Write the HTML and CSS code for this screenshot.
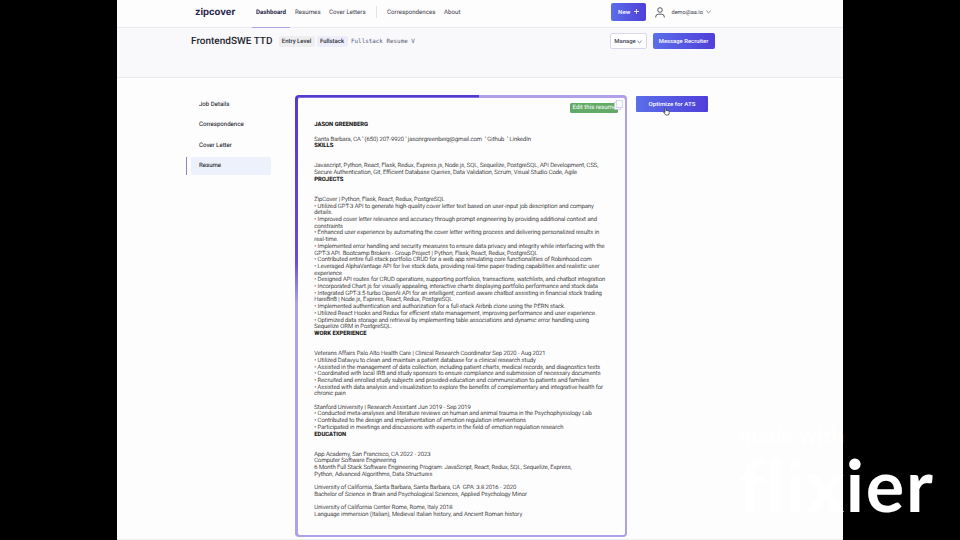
FILE: index.html
```html
<!DOCTYPE html>
<html lang="en">
<head>
<meta charset="utf-8">
<title>zipcover</title>
<link rel="stylesheet" href="styles.css">
</head>
<body>
<div class="app">
  <header class="topbar">
    <div class="logo">zipcover</div>
    <nav class="nav">
      <a class="nav-item active w-dash">Dashboard</a>
      <a class="nav-item w-res">Resumes</a>
      <a class="nav-item w-cov">Cover Letters</a>
      <span class="divider"></span>
      <a class="nav-item w-cor">Correspondences</a>
      <a class="nav-item w-abt">About</a>
    </nav>
    <div class="account">
      <button class="btn new">New <svg width="5" height="5" viewBox="0 0 5 5"><path d="M2.5 0v5M0 2.5h5" stroke="#fff" stroke-width=".8"/></svg></button>
      <svg class="user" width="10" height="11" viewBox="0 0 10 11" fill="none" stroke="#45455c" stroke-width=".9"><circle cx="5" cy="3" r="2.3"/><path d="M.7 10.5V9.8Q.9 7.2 3.3 7.2H6.7Q9.1 7.2 9.3 9.8v.7"/></svg>
      <span class="email">demo@aa.io</span>
      <svg width="5" height="4" viewBox="0 0 5 4" fill="none" stroke="#55556b" stroke-width=".7"><path d="M.4 .8l2.1 2 2.1-2"/></svg>
    </div>
  </header>
  <section class="subhead">
    <h1>FrontendSWE TTD</h1>
    <span class="tag grey">Entry Level</span>
    <span class="tag lilac">Fullstack</span>
    <span class="mono">Fullstack Resume V</span>
    <div class="actions">
      <button class="btn manage">Manage <svg width="5" height="4" viewBox="0 0 5 4" fill="none" stroke="#45455c" stroke-width=".7"><path d="M.4 .8l2.1 2 2.1-2"/></svg></button>
      <button class="btn recruiter">Message Recruiter</button>
    </div>
  </section>
  <main class="content">
    <aside class="side">
      <a>Job Details</a>
      <a>Correspondence</a>
      <a>Cover Letter</a>
      <a class="selected">Resume</a>
    </aside>
    <article class="resume">
      <div class="paper">
        <span class="edit">Edit this resume</span>
        <svg class="copy" width="9" height="10" viewBox="0 0 9 10" fill="#fcfcff" stroke="#c9c9ec" stroke-width=".8"><rect x=".5" y="2.3" width="6" height="7"/><rect x="2.3" y=".5" width="6" height="7"/></svg>
        <div class="text"><b class="name">JASON GREENBERG</b>
Santa Barbara, CA ' (650) 207-9920 ' jasonrgreenberg@gmail.com &nbsp;' Github &nbsp;' LinkedIn
<b>SKILLS</b>


Javascript, Python, React, Flask, Redux, Express.js, Node.js, SQL, Sequelize, PostgreSQL, API Development, CSS,
Secure Authentication, Git, Efficient Database Queries, Data Validation, Scrum, Visual Studio Code, Agile
<b>PROJECTS</b>


ZipCover | Python, Flask, React, Redux, PostgreSQL
• Utilized GPT-3 API to generate high-quality cover letter text based on user-input job description and company
details.
• Improved cover letter relevance and accuracy through prompt engineering by providing additional context and
constraints
• Enhanced user experience by automating the cover letter writing process and delivering personalized results in
real-time.
• Implemented error handling and security measures to ensure data privacy and integrity while interfacing with the
GPT-3 API. Bootcamp Brokers - Group Project | Python, Flask, React, Redux, PostgreSQL
• Contributed entire full-stack portfolio CRUD for a web app simulating core functionalities of Robinhood.com
• Leveraged AlphaVantage API for live stock data, providing real-time paper-trading capabilities and realistic user
experience
• Designed API routes for CRUD operations, supporting portfolios, transactions, watchlists, and chatbot integration
• Incorporated Chart.js for visually appealing, interactive charts displaying portfolio performance and stock data
• Integrated GPT-3.5-turbo OpenAI API for an intelligent, context-aware chatbot assisting in financial stock trading
HareBnB | Node.js, Express, React, Redux, PostgreSQL
• Implemented authentication and authorization for a full-stack Airbnb clone using the PERN stack.
• Utilized React Hooks and Redux for efficient state management, improving performance and user experience.
• Optimized data storage and retrieval by implementing table associations and dynamic error handling using
Sequelize ORM in PostgreSQL.
<b>WORK EXPERIENCE</b>


Veterans Affairs Palo Alto Health Care | Clinical Research Coordinator Sep 2020 - Aug 2021
• Utilized Datavyu to clean and maintain a patient database for a clinical research study
• Assisted in the management of data collection, including patient charts, medical records, and diagnostics tests
• Coordinated with local IRB and study sponsors to ensure compliance and submission of necessary documents
• Recruited and enrolled study subjects and provided education and communication to patients and families
• Assisted with data analysis and visualization to explore the benefits of complementary and integrative health for
chronic pain

Stanford University | Research Assistant Jun 2019 - Sep 2019
• Conducted meta-analyses and literature reviews on human and animal trauma in the Psychophysiology Lab
• Contributed to the design and implementation of emotion regulation interventions
• Participated in meetings and discussions with experts in the field of emotion regulation research
<b>EDUCATION</b>


App Academy, San Francisco, CA 2022 - 2023
Computer Software Engineering
6 Month Full Stack Software Engineering Program: JavaScript, React, Redux, SQL, Sequelize, Express,
Python, Advanced Algorithms, Data Structures

University of California, Santa Barbara, Santa Barbara, CA &nbsp;GPA: 3.8 2016 - 2020
Bachelor of Science in Brain and Psychological Sciences, Applied Psychology Minor

University of California Center Rome, Rome, Italy 2018
Language immersion (Italian), Medieval Italian history, and Ancient Roman history</div>
      </div>
    </article>
    <div class="tools">
      <button class="btn optimize">Optimize for ATS</button>
      <svg class="cursor" width="7" height="9" viewBox="0 0 7 9" fill="#fff" stroke="#333" stroke-width=".7"><path d="M2 5V1.1q.5-.8 1 0V3.4l2.7.6q.8.3.6 1.2L5.6 8H2.7L.6 5.2q.4-.8 1.4.4z"/></svg>
    </div>
  </main>
</div>
<div class="watermark"><span class="made">made with</span><span class="brand">flixier</span></div>
</body>
</html>
```
FILE: styles.css
```css
* { box-sizing: border-box; }
body {
  margin: 0;
  width: 960px;
  height: 540px;
  overflow: hidden;
  position: relative;
  background: #000;
  font-family: Roboto, "Liberation Sans", sans-serif;
  font-size: 6.2px;
  color: #3a3a4c;
  text-rendering: geometricPrecision;
}
.app { width: 726px; height: 540px; margin-left: 117px; background: #fdfdfd; border-bottom: 1px solid #eee; }
.topbar { height: 28px; display: flex; padding-left: 78px; border-bottom: 1px solid #ebebef; }
.logo { width: 50px; flex: none; font: 700 9.5px/25px Inter, sans-serif; color: #25224b; }
.nav { display: flex; flex: none; width: 366px; padding-left: 7px; }
.nav-item { line-height: 25px; height: 28px; white-space: nowrap; }
.nav-item.active { font-weight: 700; color: #29264a; border-bottom: 1px solid #a9a4df; }
.w-dash { width: 38px; padding-left: 4px; }
.w-res { width: 39px; padding-left: 5px; }
.w-cov { width: 47px; }
.divider { width: 1px; height: 12px; margin-top: 6px; background: #e3e3e9; }
.w-cor { margin-left: 10px; width: 57px; }
.account { display: flex; flex: none; align-items: center; height: 24px; }
.account svg { flex: none; }
.btn { font: 500 6.2px/1 Roboto, sans-serif; border: 0; border-radius: 2px; padding: 0; color: #fff; background: linear-gradient(90deg, #5b6ee9, #4f3fd9); white-space: nowrap; }
.new { flex: none; width: 35px; height: 18px; margin-right: 9px; }
.new svg { margin-left: 2px; vertical-align: -0.5px; }
.email { flex: none; width: 31px; margin: 0 3px 0 6.5px; font-size: 5.6px; line-height: 8px; padding-top: 1px; }
.subhead { height: 50px; display: flex; align-items: flex-start; padding-left: 74px; background: #f9f9fc; border-bottom: 1px solid #e8e8ed; }
.subhead > * { flex: none; }
h1 { margin: 7px 0 0; width: 87px; font-size: 10px; line-height: 14px; font-weight: 500; color: #24242d; white-space: nowrap; }
.tag { margin-top: 8px; height: 11px; font-size: 6px; line-height: 11px; font-weight: 500; text-align: center; border-radius: 2px; color: #2e2e3c; }
.grey { width: 36px; margin-left: 0.5px; background: #eeeeef; }
.lilac { width: 31px; margin-left: 2px; background: #eeeefa; }
.mono { margin: 8px 0 0 3.5px; width: 66px; font: 5.9px/12px "DejaVu Sans Mono", monospace; color: #565b78; white-space: nowrap; }
.actions { display: flex; gap: 6px; margin: 5px 0 0 192.5px; }
.manage { width: 37px; height: 16px; background: #fff; border: 1px solid #d8d8e6; color: #3f3f55; font-size: 6px; }
.manage svg { vertical-align: -0.5px; margin-left: -0.5px; }
.recruiter { width: 62px; height: 16px; padding-top: 1px; font-size: 5.9px; }
.content { display: flex; height: 461px; padding: 17px 0 0 69px; }
.side { width: 109px; flex: none; padding-top: 0.8px; }
.side a { display: block; width: 80px; height: 18px; margin: 0 0 2.5px 5px; padding-left: 8px; line-height: 18px; font-size: 6.1px; color: #292932; -webkit-text-stroke: 0.08px #292932; }
.side .selected { position: relative; background: #ecf1fb; border-radius: 2px; }
.side .selected::before { content: ""; position: absolute; left: -5px; top: 0; width: 1.3px; height: 18px; background: #8d87bd; }
.resume { width: 332px; flex: none; height: 442px; padding: 2.5px; border-radius: 4px; background:
  linear-gradient(#523bd0, #523bd0) 0 0 / 184px 2.5px no-repeat,
  linear-gradient(#523bd0, #6450d8 80%, #afa0e8) 0 0 / 3px 208px no-repeat,
  #afa0e8; }
.paper { position: relative; height: 437px; border-radius: 2px; background: #fdfdfd; padding: 24.3px 0 0 16.8px; }
.text { white-space: pre; font-size: 5.87px; line-height: 6.698px; font-weight: 300; color: #222; -webkit-text-stroke: 0.08px #222; }
.text b { font-weight: 700; color: #111; }
.text .name { display: block; height: 8.1px; }
.edit { position: absolute; left: 272px; top: 5px; width: 48px; height: 10px; padding-left: 3px; font-size: 6.1px; line-height: 10px; border-radius: 1.5px; background: #63aa68; color: #fff; white-space: nowrap; }
.copy { position: absolute; right: 2px; top: 2px; }
.tools { position: relative; padding: 1px 0 0 9px; }
.optimize { display: block; width: 72px; height: 16px; border-radius: 1px; font-size: 6.2px; }
.cursor { position: absolute; left: 35.5px; top: 12px; }
.watermark { position: absolute; left: 739px; top: 422px; width: 205px; color: #fff; font-family: Lato, sans-serif; font-weight: 700; white-space: nowrap; }
.made { display: block; font-size: 22px; line-height: 26px; letter-spacing: 0.3px; }
.brand { display: block; margin-top: -6px; font-size: 72px; line-height: 86px; letter-spacing: 1.8px; font-variant-ligatures: none; }
```
